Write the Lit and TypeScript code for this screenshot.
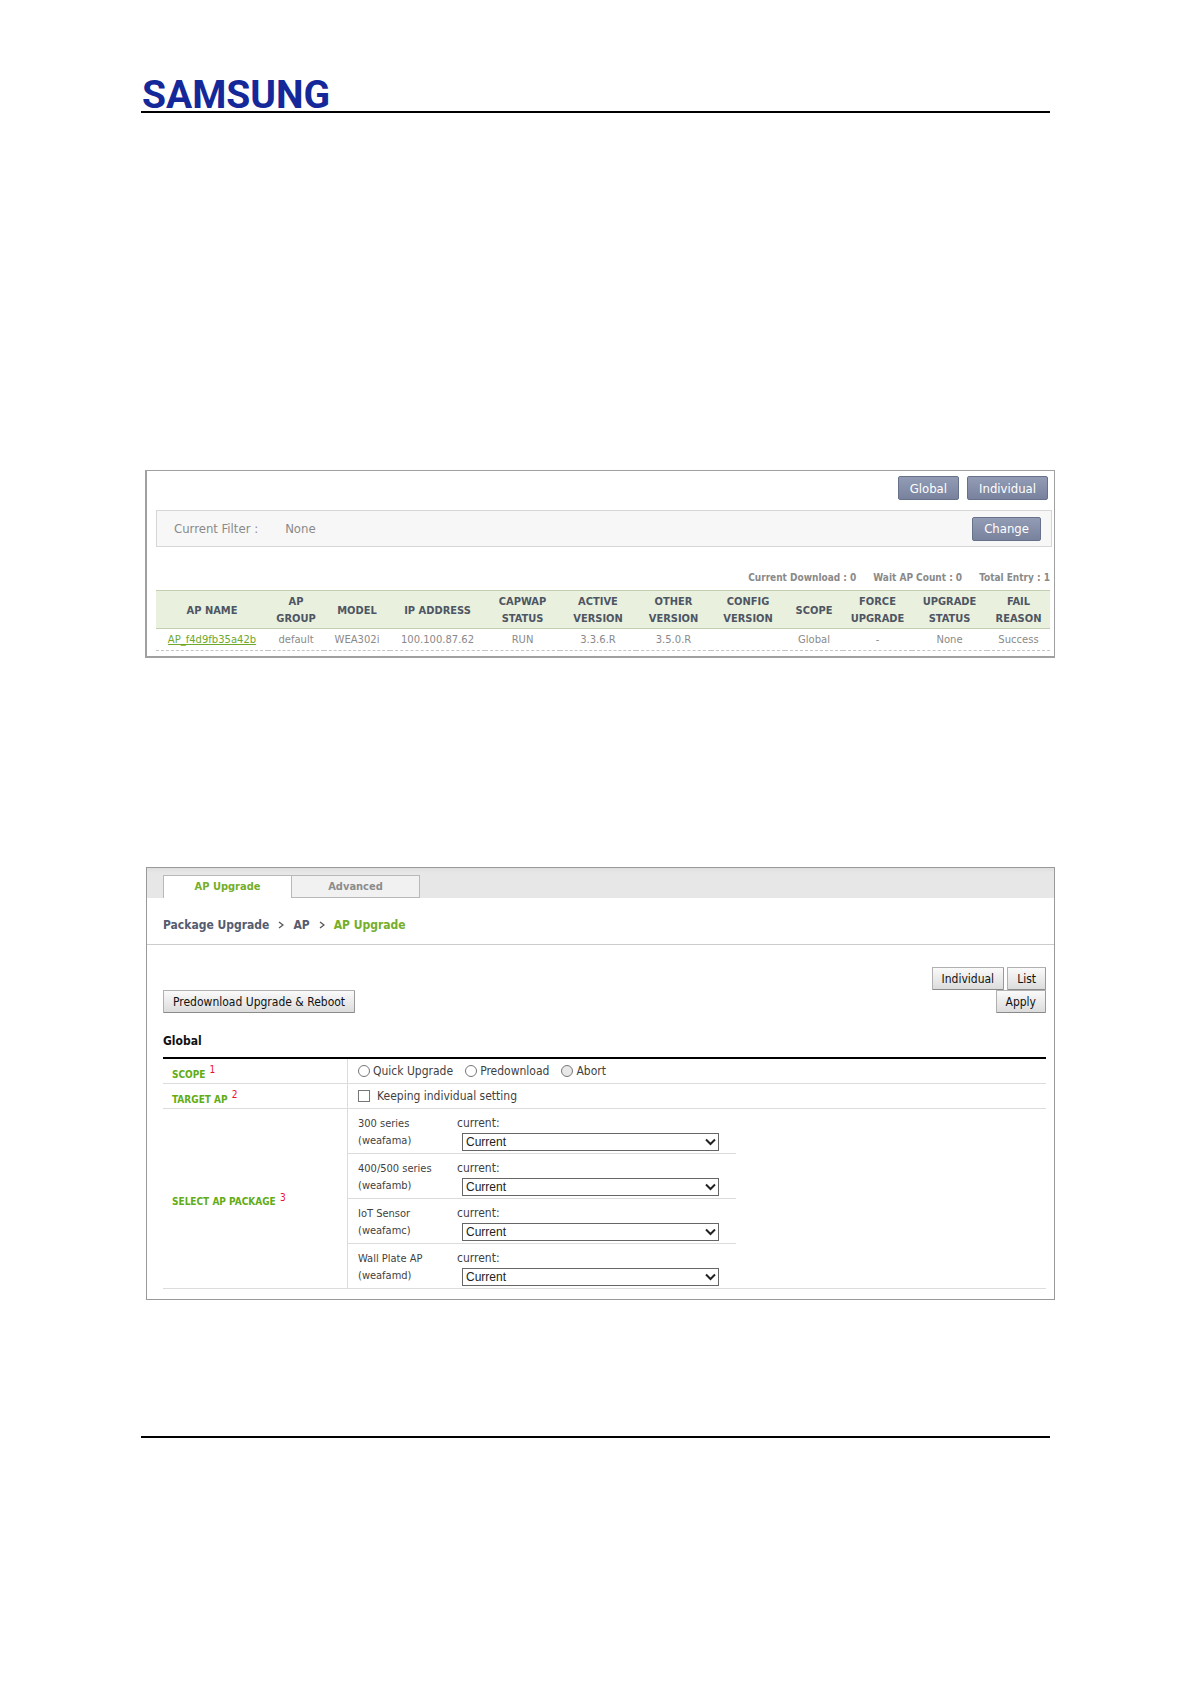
import { LitElement, html, css } from "lit";
import { customElement } from "lit/decorators.js";

interface Column {
  lines: string[];
  width: number;
}

const columns: Column[] = [
  { lines: ["AP NAME"], width: 112 },
  { lines: ["AP", "GROUP"], width: 56 },
  { lines: ["MODEL"], width: 66 },
  { lines: ["IP ADDRESS"], width: 95 },
  { lines: ["CAPWAP", "STATUS"], width: 75 },
  { lines: ["ACTIVE", "VERSION"], width: 76 },
  { lines: ["OTHER", "VERSION"], width: 75 },
  { lines: ["CONFIG", "VERSION"], width: 74 },
  { lines: ["SCOPE"], width: 58 },
  { lines: ["FORCE", "UPGRADE"], width: 69 },
  { lines: ["UPGRADE", "STATUS"], width: 75 },
  { lines: ["FAIL", "REASON"], width: 63 },
];

const accessPoints = [
  ["AP_f4d9fb35a42b", "default", "WEA302i", "100.100.87.62", "RUN", "3.3.6.R", "3.5.0.R", "", "Global", "-", "None", "Success"],
];

const packages = [
  { name: "300 series", id: "weafama" },
  { name: "400/500 series", id: "weafamb" },
  { name: "IoT Sensor", id: "weafamc" },
  { name: "Wall Plate AP", id: "weafamd" },
];

/* Upgrade status list of the access points */
@customElement("ap-status-panel")
class ApStatusPanel extends LitElement {
  static styles = css`
    :host {
      display: block;
      box-sizing: border-box;
      padding: 5px 2px 5px 9px;
      border: solid #a0a0a0;
      border-width: 1px 1px 2px 2px;
      font-family: "DejaVu Sans Condensed", "DejaVu Sans", sans-serif;
      font-size: 13px;
      color: #8a8a8a;
    }
    .actions {
      display: flex;
      justify-content: flex-end;
      gap: 8px;
      padding-right: 4px;
    }
    .button {
      height: 24px;
      padding: 0 11px;
      border: 1px solid #68718a;
      border-radius: 2px;
      background: linear-gradient(#939cb5, #79829d);
      font: inherit;
      color: #fff;
    }
    .filter {
      display: flex;
      align-items: center;
      gap: 27px;
      height: 35px;
      margin-top: 10px;
      padding: 0 10px 0 17px;
      border: 1px solid #d6d6d6;
      background: #f7f7f7;
    }
    .filter .button {
      margin-left: auto;
    }
    .summary {
      display: flex;
      justify-content: flex-end;
      gap: 17px;
      margin-top: 23px;
      padding-right: 2px;
      font-size: 10px;
      font-weight: bold;
      line-height: 16px;
    }
    .table-area {
      padding: 4px 2px 0 0;
    }
    .list {
      width: 100%;
      table-layout: fixed;
      border-collapse: collapse;
      text-align: center;
    }
    .list th {
      height: 34px;
      padding: 2px 0 1px;
      border: solid #c3cdb2;
      border-width: 1px 0;
      background: #e9f1de;
      font-size: 11px;
      line-height: 17px;
      color: #4e5563;
    }
    .list td {
      height: 21px;
      padding: 0;
      border-bottom: 1px dashed #c4c4c4;
      font-family: "DejaVu Sans", sans-serif;
      font-size: 10px;
    }
    .line {
      display: block;
    }
    .link {
      color: #6fa82a;
    }
  `;

  render() {
    return html`
      <div class="actions">
        <button class="button">Global</button>
        <button class="button">Individual</button>
      </div>
      <div class="filter">
        <span>Current Filter :</span>
        <span>None</span>
        <button class="button">Change</button>
      </div>
      <div class="summary">
        <span>Current Download : 0</span>
        <span>Wait AP Count : 0</span>
        <span>Total Entry : 1</span>
      </div>
      <div class="table-area">
        <table class="list">
          <colgroup>
            ${columns.map((c) => html`<col style="width:${c.width}px" />`)}
          </colgroup>
          <thead>
            <tr>
              ${columns.map((c) => html`<th scope="col">${c.lines.map((l) => html`<span class="line">${l}</span>`)}</th>`)}
            </tr>
          </thead>
          <tbody>
            ${accessPoints.map(
              (row) => html`<tr>
                ${row.map((cell, i) => html`<td>${i === 0 ? html`<a class="link" href="#ap">${cell}</a>` : cell}</td>`)}
              </tr>`
            )}
          </tbody>
        </table>
      </div>
    `;
  }
}

/* Package selection form */
@customElement("ap-upgrade-panel")
class ApUpgradePanel extends LitElement {
  static styles = css`
    :host {
      display: block;
      box-sizing: border-box;
      margin-left: 1px;
      border: 1px solid #999;
      font-family: "DejaVu Sans Condensed", "DejaVu Sans", sans-serif;
      font-size: 12px;
      color: #3f3f3f;
    }
    .tabs {
      display: flex;
      align-items: flex-end;
      height: 30px;
      padding-left: 16px;
      background: linear-gradient(#dedede, #e7e7e7 5px);
    }
    .tab {
      box-sizing: border-box;
      width: 128px;
      height: 23px;
      border: 1px solid #b8b8b8;
      border-left-width: 0;
      background: #f1f1f1;
      font-size: 11px;
      font-weight: bold;
      line-height: 22px;
      text-align: center;
      text-decoration: none;
      color: #8c8c8c;
    }
    .tab.active {
      width: 129px;
      border-left-width: 1px;
      border-bottom-width: 0;
      background: #fff;
      color: #74ae2b;
    }
    .crumbs {
      display: flex;
      align-items: center;
      gap: 9px;
      height: 47px;
      padding: 8px 16px 0;
      box-sizing: border-box;
      border-bottom: 1px solid #ccc;
      font-weight: bold;
      color: #555c70;
    }
    .chevron {
      width: 6px;
      height: 8px;
      fill: none;
      stroke: #555;
      stroke-width: 1.3;
    }
    .current {
      color: #74ae2b;
    }
    .body {
      padding: 22px 8px 10px 16px;
    }
    .actions {
      display: flex;
      justify-content: flex-end;
      gap: 3px;
    }
    .actions.split {
      justify-content: space-between;
    }
    .button {
      height: 23px;
      padding: 0 9px;
      border: 1px solid #b0b0b0;
      border-bottom-color: #8a8a8a;
      border-right-color: #999;
      border-radius: 1px;
      background: linear-gradient(#fafafa, #dcdcdc);
      font: inherit;
      color: #111;
    }
    .title {
      margin: 18px 0 6px;
      font-size: 12px;
      line-height: 20px;
      color: #111;
    }
    .form {
      width: 100%;
      border-collapse: separate;
      border-spacing: 0;
      border-top: 2px solid #000;
    }
    .form th,
    .form td {
      padding: 0;
      border-bottom: 1px solid #dcdcdc;
    }
    .form td {
      height: 24px;
    }
    .form th {
      width: 175px;
      padding: 7px 0 0 9px;
      border-right: 1px solid #dcdcdc;
      text-align: left;
      font-size: 10px;
      line-height: 16px;
      color: #62ac16;
    }
    .note {
      padding-left: 1px;
      font-size: 10px;
      font-weight: normal;
      line-height: 0;
      color: #e8112d;
    }
    .options {
      display: flex;
      gap: 12px;
      padding-left: 10px;
    }
    .option {
      display: flex;
      align-items: center;
      gap: 3px;
    }
    .option.wide {
      gap: 7px;
    }
    .mark {
      appearance: none;
      box-sizing: border-box;
      width: 12px;
      height: 12px;
      margin: 0;
      border: 1px solid #777;
      background: #fff;
    }
    .mark.round {
      border-radius: 50%;
    }
    .mark.round:disabled {
      background: #e8e8e8;
    }
    .packages {
      width: 388px;
    }
    .package {
      display: grid;
      grid-template-columns: 99px 1fr;
      box-sizing: border-box;
      height: 45px;
      padding: 6px 17px 2px 10px;
      border-bottom: 1px solid #dcdcdc;
      line-height: 17px;
    }
    .package:last-child {
      height: 44px;
      border-bottom: 0;
    }
    .name {
      font-size: 11px;
    }
    .line {
      display: block;
    }
    .field {
      display: flex;
      flex-direction: column;
    }
    .picker {
      display: grid;
      align-items: center;
      justify-items: end;
      margin: 1px 0 0 5px;
    }
    .select,
    .arrow {
      grid-area: 1 / 1;
    }
    .select {
      appearance: none;
      box-sizing: border-box;
      width: 100%;
      height: 18px;
      padding: 0 3px;
      border: 1px solid #666;
      border-radius: 0;
      background: #fff;
      font: 12px "Liberation Sans", sans-serif;
      color: #222;
    }
    .arrow {
      width: 11px;
      height: 8px;
      margin-right: 3px;
      fill: none;
      stroke: #222;
      stroke-width: 2;
      pointer-events: none;
    }
  `;

  private separator() {
    return html`<svg class="chevron" viewBox="0 0 6 8" aria-hidden="true"><path d="M1 1l4 3-4 3" /></svg>`;
  }

  render() {
    return html`
      <nav class="tabs">
        <a class="tab active" href="#upgrade">AP Upgrade</a>
        <a class="tab" href="#advanced">Advanced</a>
      </nav>
      <div class="crumbs">
        <span>Package Upgrade</span>${this.separator()}<span>AP</span>${this.separator()}<span class="current">AP Upgrade</span>
      </div>
      <div class="body">
        <div class="actions">
          <button class="button">Individual</button>
          <button class="button">List</button>
        </div>
        <div class="actions split">
          <button class="button">Predownload Upgrade &amp; Reboot</button>
          <button class="button">Apply</button>
        </div>
        <h2 class="title">Global</h2>
        <table class="form">
          <tr>
            <th scope="row">SCOPE <sup class="note">1</sup></th>
            <td>
              <div class="options">
                <label class="option"><input class="mark round" type="radio" name="scope" />Quick Upgrade</label>
                <label class="option"><input class="mark round" type="radio" name="scope" />Predownload</label>
                <label class="option"><input class="mark round" type="radio" name="scope" disabled />Abort</label>
              </div>
            </td>
          </tr>
          <tr>
            <th scope="row">TARGET AP <sup class="note">2</sup></th>
            <td>
              <div class="options">
                <label class="option wide"><input class="mark" type="checkbox" />Keeping individual setting</label>
              </div>
            </td>
          </tr>
          <tr>
            <th scope="row">SELECT AP PACKAGE <sup class="note">3</sup></th>
            <td>
              <div class="packages">
                ${packages.map(
                  (p) => html`<div class="package">
                    <div class="name"><span class="line">${p.name}</span><span class="line">(${p.id})</span></div>
                    <div class="field">
                      <label for=${p.id}>current:</label>
                      <div class="picker">
                        <select class="select" id=${p.id}>
                          <option>Current</option>
                        </select>
                        <svg class="arrow" viewBox="0 0 11 8" aria-hidden="true"><path d="M1 1.5l4.5 4.5 4.5-4.5" /></svg>
                      </div>
                    </div>
                  </div>`
                )}
              </div>
            </td>
          </tr>
        </table>
      </div>
    `;
  }
}

@customElement("app-root")
class AppRoot extends LitElement {
  static styles = css`
    :host {
      display: block;
      min-height: 100vh;
      background: #fff;
    }
    .header,
    .footer {
      margin: 0 141px;
      border-bottom: 2px solid #000;
    }
    .header {
      padding-top: 80px;
    }
    .logo {
      display: block;
      padding-left: 1px;
      font: bold 39px/31px "Roboto", sans-serif;
      color: #15289a;
    }
    .figures {
      display: flex;
      flex-direction: column;
      gap: 209px;
      padding: 357px 136px 136px 145px;
    }
  `;

  render() {
    return html`
      <header class="header"><span class="logo">SAMSUNG</span></header>
      <main class="figures">
        <ap-status-panel></ap-status-panel>
        <ap-upgrade-panel></ap-upgrade-panel>
      </main>
      <footer class="footer"></footer>
    `;
  }
}
